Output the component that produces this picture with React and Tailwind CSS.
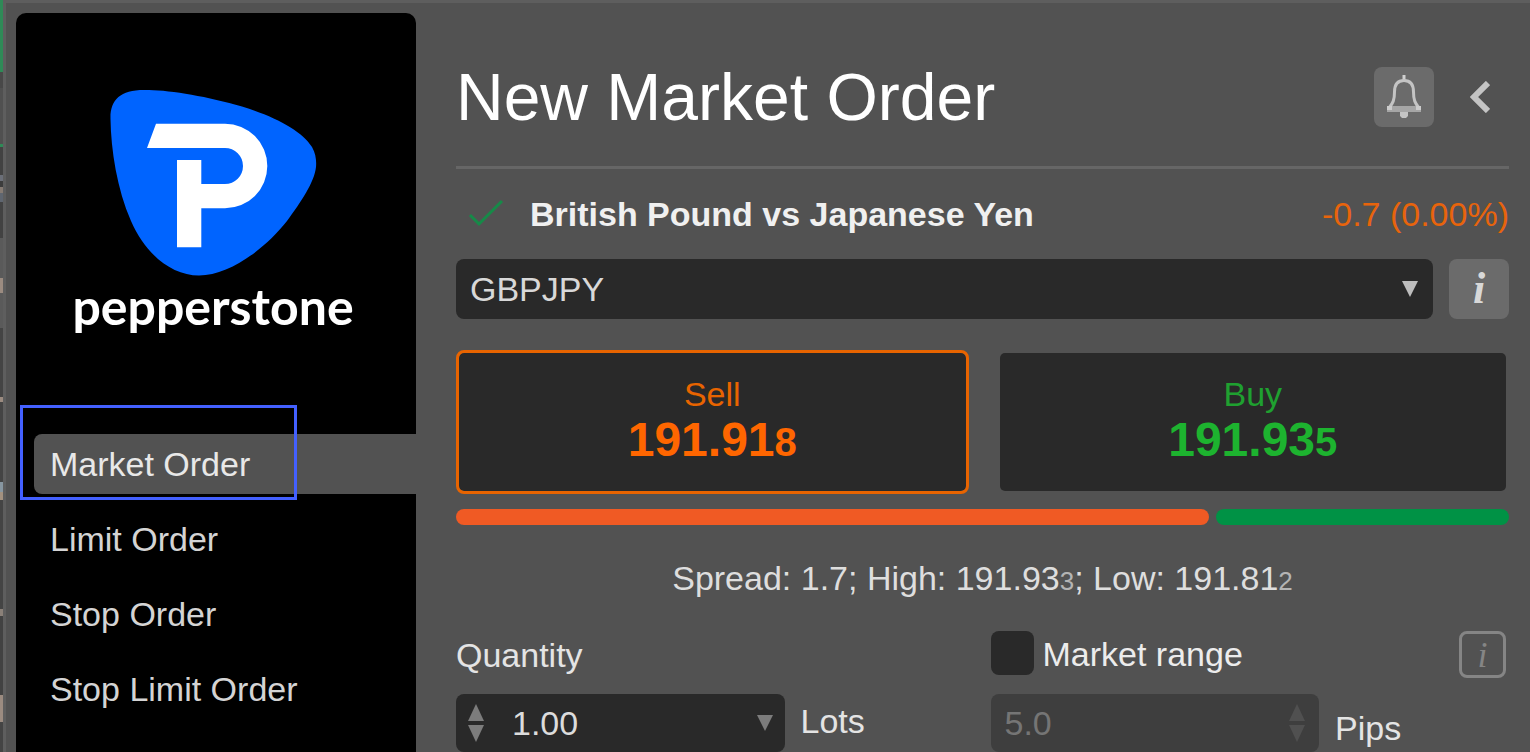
import React, { useState } from 'react';

const orderTypes = ['Market Order', 'Limit Order', 'Stop Order', 'Stop Limit Order'];

// Sliver of the chart window that shows behind the dialog
const backdrop = [
  { height: 72, color: '#2f8a57' },
  { height: 16, color: '#484848' },
  { height: 56, color: '#505050' },
  { height: 3, color: '#2f8a57' },
  { height: 28, color: '#424242' },
  { height: 6, color: '#6b6f78' },
  { height: 6, color: '#3c3c3c' },
  { height: 6, color: '#857a72' },
  { height: 9, color: '#5f6670' },
  { height: 36, color: '#424242' },
  { height: 40, color: '#5a5a5a' },
  { height: 15, color: '#9b8b80' },
  { height: 35, color: '#5a5a5a' },
  { height: 69, color: '#444444' },
  { height: 5, color: '#9b8b80' },
  { height: 80, color: '#444444' },
  { height: 10, color: '#8796a0' },
  { height: 8, color: '#a3917f' },
  { height: 109, color: '#444444' },
  { height: 7, color: '#8a8078' },
  { height: 79, color: '#424242' },
  { height: 27, color: '#9b8b80' },
];

const Logo = () => (
  <div className="flex flex-col items-center pt-[77px] pr-1.5">
    <svg className="w-[207px] h-[186px]" viewBox="110 90 207 186" aria-hidden="true">
      <path
        fill="#0064ff"
        d="M110.5 119C110 100 120 90 144 90C166 89.5 206 96 242 106.500C276 117 302 131 312 147C316 154 316.500 161 316 167C314.500 182 301 202 287 221C265 249 229 275.500 199 275.500C172 275.500 146 255 131 221C117 189 111 150 110.500 119Z"
      />
      <path
        fill="#fff"
        d="M156 123.700H225A42.200 42.200 0 0 1 225 208.300H201.300V247.300H177V160H201.300V184H225A18 18 0 0 0 225 148H147Z"
      />
    </svg>
    <div className="font-[Lato,sans-serif] font-bold text-[50px] leading-[60px] text-white">pepperstone</div>
  </div>
);

const Triangle = ({ className, up }) => (
  <svg className={className} viewBox="0 0 16 16" preserveAspectRatio="none" fill="currentColor" aria-hidden="true">
    <path d={up ? 'M8 0L16 16H0Z' : 'M0 0H16L8 16Z'} />
  </svg>
);

const Spinner = ({ disabled, label }) => (
  <div className={disabled ? 'flex flex-col gap-1 text-[#505050]' : 'flex flex-col gap-1 text-[#7c7c7c]'}>
    <button type="button" disabled={disabled} aria-label={`Increase ${label}`}>
      <Triangle up className="block w-4 h-[17px]" />
    </button>
    <button type="button" disabled={disabled} aria-label={`Decrease ${label}`}>
      <Triangle className="block w-4 h-[17px]" />
    </button>
  </div>
);

const Sidebar = ({ active, onSelect }) => (
  <aside className="w-[400px] shrink-0 bg-black rounded-t-[10px]">
    <Logo />
    <nav className="relative mt-[98px] pl-[18px] flex flex-col gap-[15px]">
      {orderTypes.map((type) => (
        <button
          key={type}
          type="button"
          onClick={() => onSelect(type)}
          className={`h-[60px] pl-4 text-left rounded-l-[8px] ${
            type === active ? 'bg-[#525252] text-[#e8e8e8]' : 'text-[#d4d4d4]'
          }`}
        >
          {type}
        </button>
      ))}
      <div className="absolute left-1 -top-[29px] w-[277px] h-[95px] border-[3px] border-[#4360ff] pointer-events-none" />
    </nav>
  </aside>
);

const Header = () => (
  <header className="flex items-center justify-between border-b-[3px] border-[#666666] pt-16 pb-[39px]">
    <h1 className="text-[66px] leading-[60px] text-white">New Market Order</h1>
    <div className="flex items-center">
      <button
        type="button"
        aria-label="Alerts"
        className="w-[60px] h-[60px] rounded-[8px] bg-[#6b6b6b] flex items-center justify-center"
      >
        <svg className="w-9 h-11" viewBox="0 0 36 44" fill="none" aria-hidden="true">
          <path d="M18 0V6" stroke="#d0d0d0" strokeWidth="3" />
          <path
            d="M3 33C7 28 8.500 25 8.500 17C8.500 9 12 5.500 18 5.500C24 5.500 27.500 9 27.500 17C27.500 25 29 28 33 33"
            stroke="#c4c4c4"
            strokeWidth="3"
          />
          <path d="M1 31H35V37H1Z" fill="#a6a6a6" />
          <path d="M1 31H6V35H1ZM30 31H35V35H30Z" fill="#cccccc" />
          <path d="M14 37H22V41L20 43H16L14 41Z" fill="#c4c4c4" />
        </svg>
      </button>
      <button type="button" aria-label="Back" className="w-[75px] h-[60px] pl-[36px]">
        <svg className="block w-5 h-8" viewBox="0 0 20 32" fill="none" aria-hidden="true">
          <path d="M18 2L4 16L18 30" stroke="#c4c4c4" strokeWidth="6" />
        </svg>
      </button>
    </div>
  </header>
);

const PriceButton = ({ side, price, pip, className, priceClass }) => (
  <button
    type="button"
    className={`rounded-[8px] bg-[#292929] bg-clip-padding border-[3px] pt-[21px] pb-[25px] ${className}`}
  >
    <span className="block leading-[40px]">{side}</span>
    <span className={`block font-bold text-[48px] leading-[52px] ${priceClass}`}>
      {price}
      <span className="text-[40px] leading-none">{pip}</span>
    </span>
  </button>
);

const OrderForm = () => {
  const [quantity, setQuantity] = useState('1.00');
  const [ranged, setRanged] = useState(false);

  return (
    <main className="flex-1 min-w-0 pl-10 pr-[21px]">
      <Header />

      <div className="flex items-center justify-between py-[25px] leading-[40px]">
        <div className="flex items-center">
          <svg className="w-[60px] h-8 mr-[14px]" viewBox="0 0 60 32" fill="none" aria-hidden="true">
            <path d="M14 17L23 26L46 3" stroke="#168a48" strokeWidth="3" />
          </svg>
          <h2 className="font-bold text-[#f0f0f0]">British Pound vs Japanese Yen</h2>
        </div>
        <span className="text-[#e8640c]">-0.7 (0.00%)</span>
      </div>

      <div className="flex gap-4">
        <div className="relative flex-1">
          <select
            aria-label="Symbol"
            className="appearance-none w-full h-[60px] pl-[14px] rounded-[8px] bg-[#292929] text-[#d8d8d8]"
          >
            <option>GBPJPY</option>
          </select>
          <Triangle className="absolute right-[15px] top-[22px] w-4 h-4 text-[#bdbdbd] pointer-events-none" />
        </div>
        <button
          type="button"
          aria-label="Symbol info"
          className="w-[60px] h-[60px] rounded-[8px] bg-[#6b6b6b] font-['Liberation_Serif',serif] italic font-bold text-[44px] text-[#d8d8d8]"
        >
          i
        </button>
      </div>

      <div className="grid grid-cols-2 gap-7 mt-[31px]">
        <PriceButton
          side="Sell"
          price="191.91"
          pip="8"
          className="border-[#e86400] text-[#e86400]"
          priceClass="text-[#ff6600]"
        />
        <PriceButton
          side="Buy"
          price="191.93"
          pip="5"
          className="border-transparent text-[#1fa030]"
          priceClass="text-[#1db32f]"
        />
      </div>

      <div className="flex gap-[7px] mt-[15px] h-4">
        <div className="grow-[72] rounded-full bg-[#f05a24]" />
        <div className="grow-[28] rounded-full bg-[#009245]" />
      </div>

      <p className="py-8 leading-[42px] text-center text-[#dedede]">
        Spread: 1.7; High: 191.93<span className="text-[26px] leading-none text-[#b4b4b4]">3</span>; Low: 191.81
        <span className="text-[26px] leading-none text-[#b4b4b4]">2</span>
      </p>

      <div className="grid grid-cols-2 gap-4">
        <div>
          <label htmlFor="quantity" className="block h-[47px] leading-[48px] text-[#e4e4e4]">
            Quantity
          </label>
          <div className="flex items-start gap-4 mt-4">
            <div className="flex-1 min-w-0 flex items-center h-[58px] px-3 rounded-[8px] bg-[#292929]">
              <Spinner label="quantity" />
              <input
                id="quantity"
                value={quantity}
                onChange={(e) => setQuantity(e.target.value)}
                className="flex-1 min-w-0 pl-7 text-[#dcdcdc] outline-none"
              />
              <button type="button" aria-label="Quantity presets" className="text-[#7c7c7c]">
                <Triangle className="block w-4 h-4" />
              </button>
            </div>
            <span className="w-[174px] leading-[54px] text-[#e4e4e4]">Lots</span>
          </div>
        </div>

        <div>
          <div className="flex justify-between pr-[3px] h-[47px]">
            <label className="flex items-start gap-[9px] leading-[46px] text-[#ececec]">
              <input
                type="checkbox"
                checked={ranged}
                onChange={(e) => setRanged(e.target.checked)}
                className="appearance-none w-[43px] h-11 rounded-[8px] bg-[#292929] checked:bg-[#168a48]"
              />
              Market range
            </label>
            <button
              type="button"
              aria-label="Market range info"
              className="w-[47px] h-[47px] rounded-[8px] border-[3px] border-[#858585] font-['Liberation_Serif',serif] italic text-[36px] leading-[40px] text-[#858585]"
            >
              i
            </button>
          </div>
          <div className="flex items-end gap-4 mt-4">
            <div className="flex-1 min-w-0 flex items-center h-[58px] px-[14px] rounded-[8px] bg-[#3e3e3e]">
              <input
                aria-label="Market range in pips"
                defaultValue="5.0"
                disabled={!ranged}
                className="flex-1 min-w-0 text-[#757575] outline-none"
              />
              <Spinner label="market range" disabled={!ranged} />
            </div>
            <span className="w-[174px] leading-[48px] text-[#e4e4e4]">Pips</span>
          </div>
        </div>
      </div>
    </main>
  );
};

const App = () => {
  const [orderType, setOrderType] = useState('Market Order');

  return (
    <div className="flex min-h-screen bg-[#525252] font-['Liberation_Sans',Arial,sans-serif] text-[34px] leading-[40px]">
      <div className="w-[3px] shrink-0 bg-[#444444]">
        {backdrop.map((band, i) => (
          <div key={i} style={{ height: band.height, backgroundColor: band.color }} />
        ))}
      </div>
      <div className="flex-1 min-w-0 flex border-t-[3px] border-l-[3px] border-[#5e5e5e]">
        <div className="flex pt-[10px] pl-[10px]">
          <Sidebar active={orderType} onSelect={setOrderType} />
        </div>
        <OrderForm />
      </div>
    </div>
  );
};

export default App;
